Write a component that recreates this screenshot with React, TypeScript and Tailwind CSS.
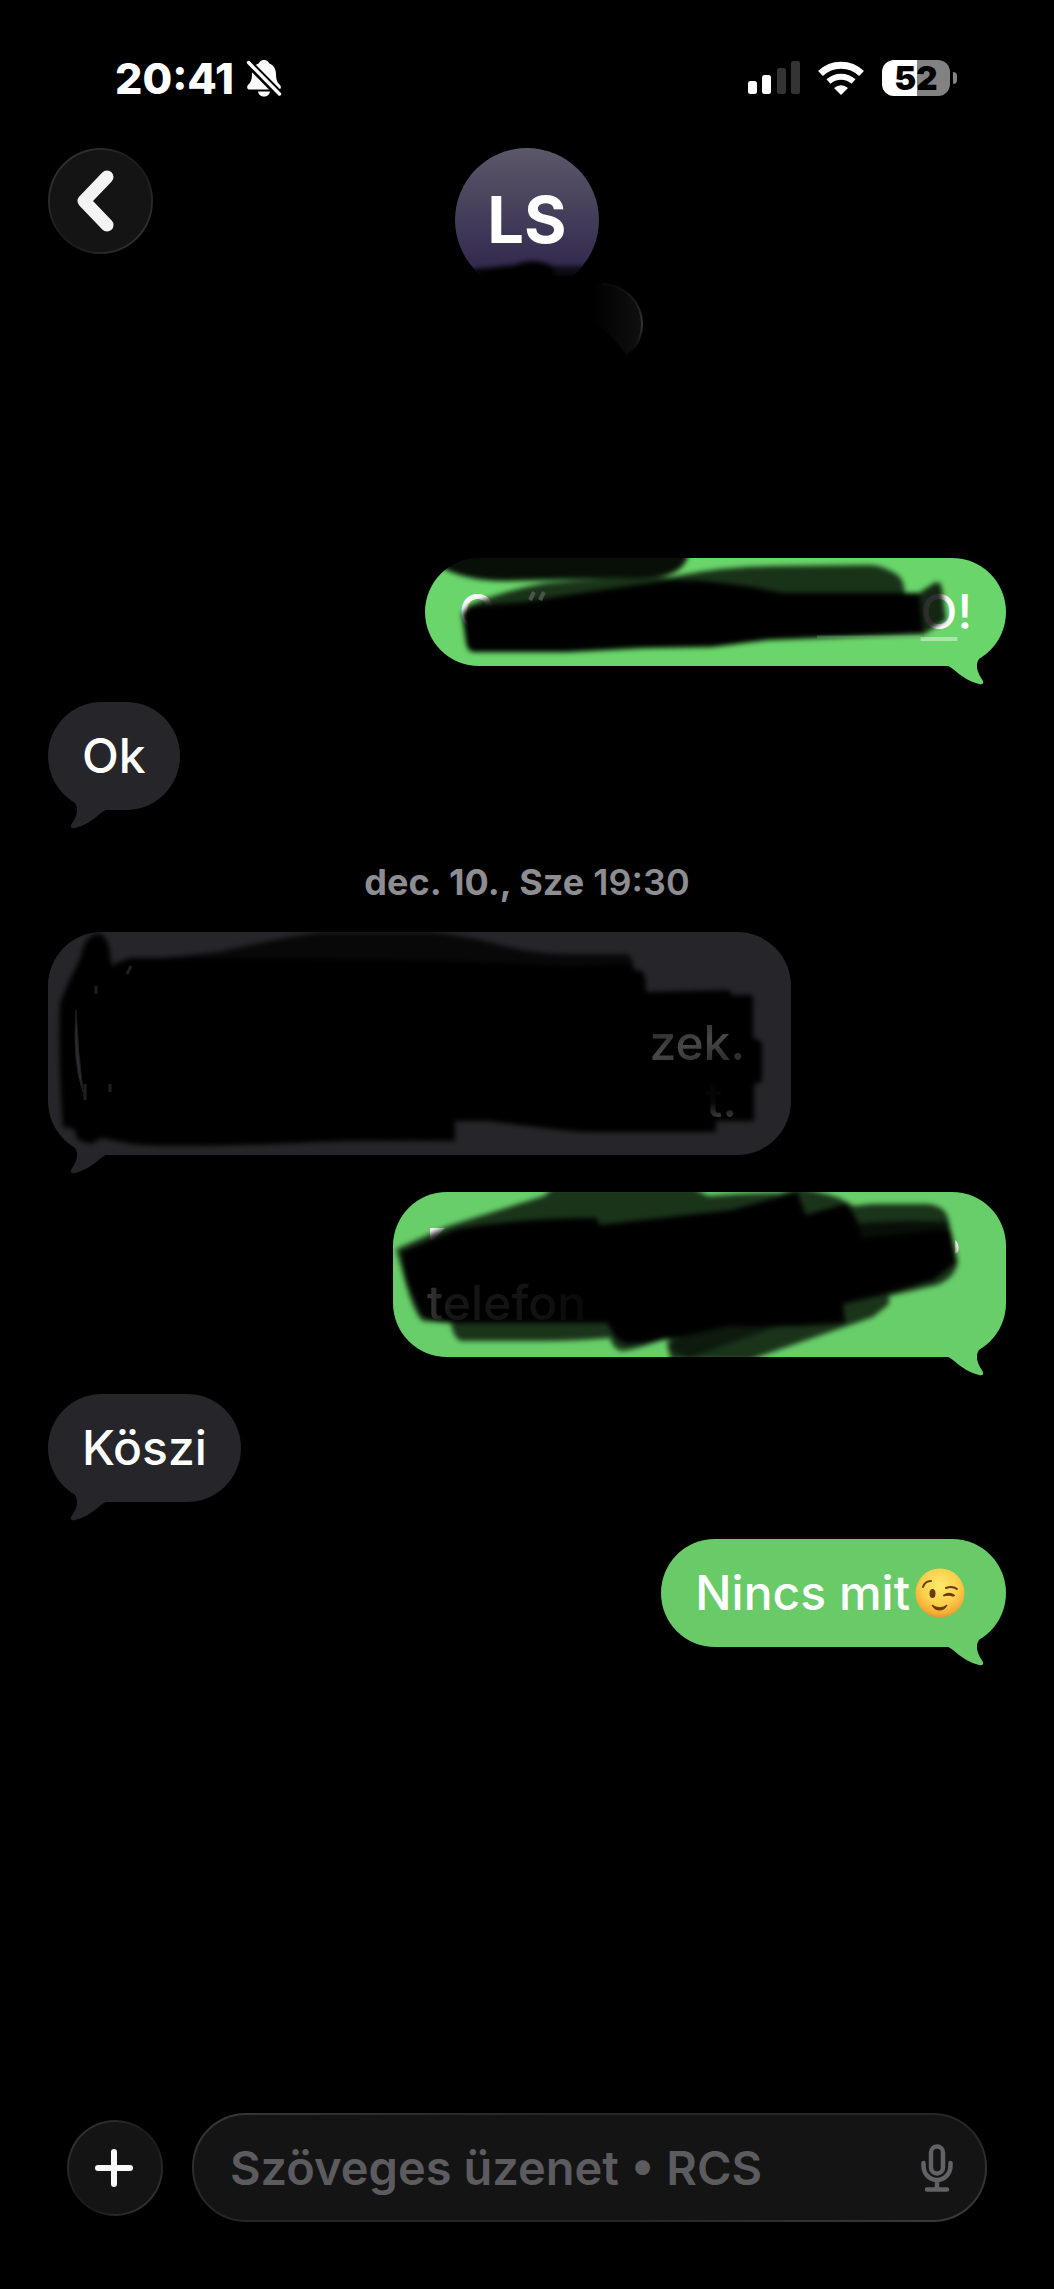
import type { ReactNode } from "react";

type BubbleProps = {
  side: "in" | "out";
  tone?: string;
  className?: string;
  children: ReactNode;
};

function Tail({ side }: { side: "in" | "out" }) {
  return (
    <svg
      viewBox="0 0 60 50"
      fill="currentColor"
      className={
        side === "out"
          ? "absolute right-0 -bottom-5 w-[60px] h-[50px]"
          : "absolute left-0 -bottom-5 w-[60px] h-[50px] -scale-x-100"
      }
      aria-hidden="true"
    >
      <path d="M0 29 Q3 30 7 33 Q20 45 33 48 Q38 49 37 45 Q30 35 31 28 Q32 22 40 15 L30 0 L0 10 Z" />
    </svg>
  );
}

function Bubble({ side, tone, className = "", children }: BubbleProps) {
  const color = side === "out" ? tone ?? "bg-[#68cb68] text-[#68cb68]" : "bg-[#262529] text-[#262529]";
  return (
    <div
      className={`relative rounded-[54px] px-[34px] pt-[25px] pb-[26px] ${color} ${
        side === "out" ? "self-end" : "self-start"
      } ${className}`}
    >
      <Tail side={side} />
      <div className="relative text-white text-[48px] leading-[57px] font-medium">{children}</div>
    </div>
  );
}

function BellOff() {
  return (
    <svg viewBox="0 0 36 38" className="w-9 h-[38px]" aria-label="Néma">
      <path
        fill="#fff"
        d="M18 1c2.500 0 4.500 1.300 5 3.300 4.500 1.700 7 5.700 7 10.700 0 6 1.500 8.500 3.600 10.600 2.200 2.200 1.400 4.900-1.600 4.900H4c-3 0-3.800-2.700-1.600-4.900C4.500 23.500 6 21 6 15c0-5 2.500-9 7-10.700C13.500 2.300 15.500 1 18 1Z"
      />
      <path fill="#fff" d="M12 32.500h12c-.5 3-3 5-6 5s-5.500-2-6-5Z" />
      <path d="M2 3.500 L34 36" stroke="#000" strokeWidth="8" />
      <path d="M2.500 3.500 L33.500 35" stroke="#fff" strokeWidth="3.400" strokeLinecap="round" />
    </svg>
  );
}

function StatusBar() {
  return (
    <div className="flex justify-between h-[148px] pt-[52px] pl-[115px] pr-[97px]">
      <div className="flex items-center gap-3 h-[52px] text-white">
        <span className="text-[43px] leading-[52px] font-extrabold">20:41</span>
        <BellOff />
      </div>
      <div className="flex items-center h-[52px]">
        <svg viewBox="0 0 52 34" className="w-[52px] h-[34px] mr-[18px]" aria-label="Térerő">
          <rect x="0" y="20" width="9" height="13" rx="2.500" fill="#fff" />
          <rect x="14" y="14" width="9" height="19" rx="2.500" fill="#fff" />
          <rect x="29" y="7" width="9" height="26" rx="2.500" fill="#343434" />
          <rect x="43" y="0" width="9" height="33" rx="2.500" fill="#343434" />
        </svg>
        <svg viewBox="0 0 46 34" className="w-[46px] h-[34px] mr-[18px]" aria-label="Wi-Fi">
          <g fill="none" stroke="#fff">
            <path d="M2.500 12.500 A29.500 29.500 0 0 1 43.500 12.500" strokeWidth="7" />
            <path d="M10.500 20.500 A18.500 18.500 0 0 1 35.500 20.500" strokeWidth="6" />
          </g>
          <path d="M23 34 L16 27 Q23 21.500 30 27 Z" fill="#fff" />
        </svg>
        <div className="relative flex items-center justify-center w-[68px] h-9 rounded-[12px] bg-[linear-gradient(90deg,#fff_52%,#828282_52%)]">
          <span className="text-[33px] leading-9 font-black text-black">52</span>
        </div>
        <div className="w-1 h-3 ml-[3px] rounded-r-full bg-[#828282]" />
      </div>
    </div>
  );
}

function Header() {
  return (
    <header className="grid grid-cols-[1fr_auto_1fr] h-[410px] px-12">
      <button
        type="button"
        aria-label="Vissza"
        className="flex items-center justify-center w-[105px] h-[106px] rounded-full p-[2px] bg-[linear-gradient(135deg,#3a3a3a,#1c1c1c_45%,#1c1c1c_60%,#3a3a3a)]"
      >
        <span className="flex items-center justify-center w-full h-full rounded-full bg-[#141414]">
          <svg viewBox="0 0 40 62" className="w-10 h-[62px] mr-3" aria-hidden="true">
            <path
              d="M32 7 L9 31 L32 55"
              fill="none"
              stroke="#f3f3f3"
              strokeWidth="13"
              strokeLinecap="round"
              strokeLinejoin="round"
            />
          </svg>
        </span>
      </button>
      <div className="flex flex-col items-center">
        <div className="relative flex items-center justify-center w-36 h-36 rounded-full overflow-hidden bg-[linear-gradient(180deg,#5c5869,#352c50_78%,#352c50_88%,#000_90%)]">
          <span className="text-[65px] leading-[80px] font-bold text-white">LS</span>
          <svg viewBox="0 0 144 144" className="absolute inset-0 w-36 h-36" aria-hidden="true">
            <g filter="url(#soft)">
              <path d="M-10 124 L20 121 L60 117 Q78 109 98 118 L106 154 H-10 Z" />
              <path d="M84 118 H160 V154 H84 Z" opacity="0.75" />
              <path d="M90 128 H160 V160 H90 Z" />
            </g>
          </svg>
        </div>
        <svg viewBox="0 0 232 84" className="w-[232px] h-[84px] -mt-[10px]" aria-hidden="true">
          <defs>
            <linearGradient id="pill" x1="0" x2="1" y1="0" y2="0">
              <stop offset="0" stopColor="#000" />
              <stop offset="1" stopColor="#101010" />
            </linearGradient>
            <linearGradient id="rim" x1="0" x2="0" y1="0" y2="1">
              <stop offset="0" stopColor="#0a0a0a" />
              <stop offset="0.5" stopColor="#323232" />
              <stop offset="0.9" stopColor="#000" />
            </linearGradient>
          </defs>
          <path d="M180 2 H191 A40 40 0 0 1 216 74 Q200 50 180 40 Z" fill="url(#pill)" />
          <path d="M191 2 A40 40 0 0 1 191 82" fill="none" stroke="url(#rim)" strokeWidth="2" />
        </svg>
      </div>
    </header>
  );
}

function FirstMessage() {
  return (
    <Bubble side="out" tone="bg-[#6ad56a] text-[#6ad56a]" className="w-[581px]">
      <div className="flex justify-between">
        <span>C</span>
        <span>
          <span className="underline decoration-[#a9e6a9] decoration-4 underline-offset-8">O</span>!
        </span>
      </div>
      <svg viewBox="0 0 581 108" className="absolute -left-[34px] -top-[25px] w-[581px] h-[108px]" aria-hidden="true">
        <g filter="url(#soft)">
          <path d="M-4 -8 L14 8 Q40 23 80 23 L215 20 Q262 21 264 -8 Z" opacity="0.93" />
          <path
            d="M42 48 Q80 32 121 25 Q180 20 246 19 Q300 8 350 8 L446 7 Q460 8 474 18 Q480 24 480 40 L300 60 L60 60 Z"
            opacity="0.76"
          />
          <path d="M494 35 L509 25 Q516 22 517 31 L521 62 L498 77 L490 60 Z" opacity="0.82" />
          <path d="M42 50 L60 47 L100 44 L162 34 L246 22 Q300 22 358 35 H494 L498 76 L342 82 L287 89 L220 90 L142 94 H50 Q42 94 41 84 L37 56 Z" />
        </g>
        <path d="M105 42 L109 34 M115 42 L119 34" stroke="#4c524c" strokeWidth="4" />
        <path d="M392 79 H495" stroke="#7fb57f" strokeWidth="3" opacity="0.35" />
      </svg>
    </Bubble>
  );
}

function LongMessage() {
  return (
    <Bubble side="in" className="w-[743px]">
      <div className="h-[172px]" />
      <svg viewBox="0 0 743 223" className="absolute -left-[34px] -top-[25px] w-[743px] h-[223px]" aria-hidden="true">
        <g filter="url(#soft)">
          <path d="M68 30 Q120 26 170 20 Q220 8 272 0 H385 Q430 6 456 14 Q490 22 517 22 H578 Q586 24 586 40 L60 70 Z" opacity="0.78" />
          <path d="M64 34 L81 26 H250 Q400 28 520 34 L581 32 L586 38 L594 39 Q598 42 598 60 L681 58 L684 63 H705 V106 L714 110 V150 L706 152 V189 H668 V200 H533 Q490 196 441 189 H407 V209 Q300 208 252 211 Q120 216 84 212 L53 206 L43 212 L30 208 L26 197 L15 195 Q10 130 12 71 Q20 50 33 25 Q36 6 47 2 Q60 0 62 22 Z" />
        </g>
        <path d="M28 78 Q24 130 35 160 Q30 120 28 78 Z" fill="#2c2c30" stroke="#1e1e20" />
        <path d="M48 54 V62 M37 152 V168 M62 152 V160" stroke="#202022" strokeWidth="3" />
        <path d="M79 42 L83 34" stroke="#202022" strokeWidth="3" />
      </svg>
      <p className="absolute right-0 top-[57px] mr-3 bg-[linear-gradient(165deg,#141414,#484848_50%,#1c1c1c)] bg-clip-text text-transparent">
        zek.
      </p>
      <p className="absolute right-0 top-[114px] mr-5 bg-[linear-gradient(180deg,#060606_55%,#606060)] bg-clip-text text-transparent">
        t.
      </p>
    </Bubble>
  );
}

function ReplyMessage() {
  return (
    <Bubble side="out" tone="bg-[#68ce69] text-[#68ce69]" className="w-[613px]">
      <div className="h-[114px]" />
      <svg viewBox="0 0 613 165" className="absolute -left-[34px] -top-[25px] w-[613px] h-[165px]" aria-hidden="true">
        <path d="M37 36 H52 L40 48 H37 Z M562 48 Q567 52 565 60 L562 62 Z" fill="#fff" />
        <g filter="url(#soft)">
          <path
            d="M3 57 L55 34 L151 4 L160 -4 H300 L315 4 Q350 1 387 1 L404 -4 Q440 2 452 9 L461 14 L479 12 H535 Q552 14 555 26 L565 70 Q562 86 544 93 L496 104 V112 L480 125 L356 168 H278 L274 151 L280 143 Q250 156 230 159 Q220 158 217 146 Q180 149 151 149 H68 Q60 146 58 131 L29 129 Q20 118 14 96 Z"
            opacity="0.75"
          />
          <path d="M8 60 L64 37 Q130 26 204 26 L206 33 L339 18 L404 0 L413 23 L452 12 Q464 20 468 46 L544 38 L558 40 L562 71 L540 88 L492 102 L450 112 L452 131 Q390 136 335 134 Q270 150 235 152 Q222 150 215 131 H64 Q40 130 29 124 L14 90 Z" />
          <path d="M461 32 Q500 28 555 30 L560 70 L470 80 Z" opacity="0.7" />
          <path d="M296 166 L390 132 L300 134 L274 156 Z" opacity="0.5" />
        </g>
      </svg>
      <p className="absolute left-0 top-[57px] bg-[linear-gradient(90deg,#383838,#161616_14%,#121212_70%,#080808)] bg-clip-text text-transparent">
        telefon
      </p>
    </Bubble>
  );
}

function Wink() {
  return (
    <svg viewBox="0 0 50 50" className="w-[50px] h-[50px]" role="img" aria-label="😉">
      <defs>
        <radialGradient id="face" cx="0.5" cy="0.35" r="0.68">
          <stop offset="0" stopColor="#ffe86a" />
          <stop offset="0.55" stopColor="#fdd04c" />
          <stop offset="0.85" stopColor="#f5ab35" />
          <stop offset="1" stopColor="#e08a24" />
        </radialGradient>
      </defs>
      <circle cx="25" cy="25" r="24.500" fill="url(#face)" />
      <ellipse cx="17.500" cy="25.500" rx="3" ry="4.500" fill="#6b3a0c" />
      <g fill="none" stroke="#6b3a0c" strokeWidth="2" strokeLinecap="round">
        <path d="M8 19 Q10 13 16 13" />
        <path d="M31 20 Q37 17.500 42 21" />
        <path d="M29 27.500 Q34 24 39 27.500 M31 27 Q35 26.500 38 27.500" />
      </g>
      <path d="M17 37 Q25 42.500 32 37 Q30 42 24.500 42 Q19 42 17 37 Z" fill="#6b3a0c" stroke="#6b3a0c" strokeLinejoin="round" />
    </svg>
  );
}

function Composer() {
  return (
    <form className="flex items-center gap-[29px] pl-[67px] pr-[67px] pb-[67px]">
      <button
        type="button"
        aria-label="Hozzáadás"
        className="shrink-0 w-24 h-24 rounded-full p-[2px] bg-[linear-gradient(135deg,#3a3a3a,#1c1c1c_45%,#1c1c1c_60%,#3a3a3a)]"
      >
        <span className="flex items-center justify-center w-full h-full rounded-full bg-[#141414]">
          <svg viewBox="0 0 38 38" className="w-[38px] h-[38px] mr-[2px]" aria-hidden="true">
            <path d="M19 3 V35 M3 19 H35" stroke="#fafafa" strokeWidth="6" strokeLinecap="round" />
          </svg>
        </span>
      </button>
      <div className="flex-1 min-w-0 h-[109px] rounded-[54px] p-[2px] bg-[linear-gradient(165deg,#383838,#262626_30%,#262626_70%,#3c3c3c)]">
        <div className="flex items-center h-full rounded-[52px] bg-[#141414] pl-9 pr-8">
          <input
            type="text"
            aria-label="Üzenet"
            placeholder="Szöveges üzenet • RCS"
            className="flex-1 min-w-0 bg-transparent outline-none text-white text-[47px] leading-[60px] font-semibold placeholder:text-[#5c5b5f]"
          />
          <button type="button" aria-label="Diktálás">
            <svg viewBox="0 0 32 48" className="w-8 h-12" fill="none" stroke="#626166" strokeWidth="4.500" strokeLinecap="round" aria-hidden="true">
              <rect x="10" y="2.500" width="12" height="27" rx="6" />
              <path d="M2.500 19 V22 A13.500 14 0 0 0 29.500 22 V19 M16 37 V45 M6 45.500 H26" />
            </svg>
          </button>
        </div>
      </div>
    </form>
  );
}

export default function App() {
  return (
    <div className="flex flex-col min-h-screen bg-black font-['Inter','Liberation_Sans',sans-serif]">
      <svg className="absolute w-0 h-0" aria-hidden="true">
        <filter id="soft">
          <feGaussianBlur stdDeviation="2.500" />
        </filter>
      </svg>
      <StatusBar />
      <Header />
      <main className="flex flex-col flex-1 px-12">
        <FirstMessage />
        <Bubble side="in" className="mt-9">Ok</Bubble>
        <p className="mt-[52px] mb-[30px] text-center text-[36px] leading-10 font-semibold text-[#8d8d92]">
          <span className="font-bold">dec. 10., Sze</span> 19:30
        </p>
        <LongMessage />
        <div className="flex flex-col gap-[37px] mt-[37px]">
          <ReplyMessage />
          <Bubble side="in">Köszi</Bubble>
          <Bubble side="out">
            <span className="flex items-center gap-[5px] pr-[7px]">
              Nincs mit
              <Wink />
            </span>
          </Bubble>
        </div>
      </main>
      <Composer />
    </div>
  );
}
